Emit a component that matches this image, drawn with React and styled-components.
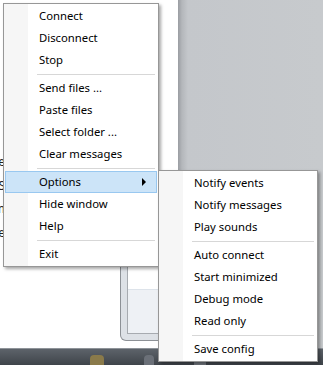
import React from 'react';
import styled, { createGlobalStyle } from 'styled-components';

const GlobalStyle = createGlobalStyle`
  html, body {
    margin: 0;
    padding: 0;
    overflow: hidden;
    background: #ffffff;
  }
`;

const mainItems = [
  'Connect',
  'Disconnect',
  'Stop',
  '-',
  'Send files ...',
  'Paste files',
  'Select folder ...',
  'Clear messages',
  '-',
  { label: 'Options', submenu: true, active: true },
  'Hide window',
  'Help',
  '-',
  'Exit',
];

const optionItems = [
  'Notify events',
  'Notify messages',
  'Play sounds',
  '-',
  'Auto connect',
  'Start minimized',
  'Debug mode',
  'Read only',
  '-',
  'Save config',
];

const Menu = ({ items, left, top, width }) => (
  <MenuPanel $left={left} $top={top} $width={width}>
    {items.map((item, i) => {
      if (item === '-') return <Separator key={i} />;
      const entry = typeof item === 'string' ? { label: item } : item;
      return (
        <MenuItem key={i} $active={entry.active}>
          <span>{entry.label}</span>
          {entry.submenu && <Arrow />}
        </MenuItem>
      );
    })}
  </MenuPanel>
);

const App = () => {
  return (
    <>
      <GlobalStyle />
      <Desktop>
        <WhiteWindow>
          <EdgeText>
            <span>e</span>
            <span>S</span>
            <span>m</span>
            <span>e</span>
          </EdgeText>
          <Frame>
            <FrameInner>
              <PinkMark />
              <StatusBand />
            </FrameInner>
          </Frame>
        </WhiteWindow>
        <GrayPanel />
        <Taskbar>
          <TrayBlob $w={14} $c="#8a7a4a" />
          <TrayBlob $w={10} $c="#6b7078" />
          <TrayBlob $w={12} $c="#70757c" />
        </Taskbar>
        <Menu items={mainItems} left={3} top={3} width={156} />
        <Menu items={optionItems} left={158} top={170} width={160} />
      </Desktop>
    </>
  );
};

const Desktop = styled.div`
  position: relative;
  width: 323px;
  height: 365px;
  overflow: hidden;
  display: grid;
  grid-template-columns: 178px 1fr;
  grid-template-rows: 348px 17px;
  font-family: 'Noto Sans', 'Open Sans', sans-serif;
`;

const WhiteWindow = styled.div`
  background: #ffffff;
  display: flex;
  flex-direction: column;
  justify-content: space-between;
  overflow: hidden;
`;

const EdgeText = styled.div`
  display: flex;
  flex-direction: column;
  align-items: flex-end;
  width: 5px;
  padding-top: 150px;
  font-size: 12px;
  line-height: 23.5px;
  color: #222;
  overflow: hidden;
`;

const Frame = styled.div`
  align-self: flex-end;
  width: 56px;
  height: 88px;
  margin-right: -6px;
  margin-bottom: 7px;
  border: 1px solid #8d9196;
  border-top: none;
  border-radius: 0 0 0 6px;
  background: #dde1e6;
  padding: 0 0 6px 6px;
  display: flex;
`;

const FrameInner = styled.div`
  position: relative;
  flex: 1;
  border: 1px solid #a7abb0;
  border-top: none;
  background: #ffffff;
  display: flex;
  flex-direction: column;
  justify-content: flex-end;
`;

const PinkMark = styled.div`
  position: absolute;
  left: 17px;
  top: 8px;
  width: 5px;
  height: 5px;
  background: #b0336a;
  transform: rotate(45deg);
`;

const StatusBand = styled.div`
  height: 43px;
  border-top: 1px solid #dde3ea;
  background: #eef1f5;
`;

const GrayPanel = styled.div`
  background: linear-gradient(to right, #9a9da2 0px, #b4b7bb 4px, #c4c7cb 10px, #c7cacd 100%);
`;

const Taskbar = styled.div`
  grid-column: 1 / -1;
  border-top: 1px solid #8e9399;
  background: linear-gradient(to bottom, #5d636a, #3f444a);
  display: flex;
  align-items: flex-end;
  gap: 40px;
  padding-left: 90px;
`;

const TrayBlob = styled.div`
  width: ${(p) => p.$w}px;
  height: 10px;
  border-radius: 4px 4px 0 0;
  background: ${(p) => p.$c};
`;

const MenuPanel = styled.div`
  position: absolute;
  left: ${(p) => p.$left}px;
  top: ${(p) => p.$top}px;
  width: ${(p) => p.$width}px;
  box-sizing: border-box;
  padding: 1px;
  border: 1px solid #979797;
  background: linear-gradient(to right, #f6f6f6 0 24px, #ffffff 24px);
  box-shadow: 2px 2px 3px rgba(0, 0, 0, 0.35);
  display: flex;
  flex-direction: column;
`;

const MenuItem = styled.div`
  height: 22px;
  box-sizing: border-box;
  padding: 0 10px 2px 33px;
  display: flex;
  align-items: center;
  justify-content: space-between;
  font-size: 11.3px;
  color: #000;
  white-space: nowrap;
  border: 1px solid ${(p) => (p.$active ? '#99c8f0' : 'transparent')};
  background: ${(p) => (p.$active ? '#cce4f8' : 'transparent')};

  & > span:last-child:not(:first-child) {
    margin-top: 2px;
  }
`;

const Arrow = styled.span`
  width: 0;
  height: 0;
  border-top: 4px solid transparent;
  border-bottom: 4px solid transparent;
  border-left: 4px solid #000;
`;

const Separator = styled.div`
  height: 6px;
  display: flex;
  align-items: center;
  padding: 0 2px 0 32px;

  &::after {
    content: '';
    flex: 1;
    height: 1px;
    background: #d7d7d7;
  }
`;

export default App;
